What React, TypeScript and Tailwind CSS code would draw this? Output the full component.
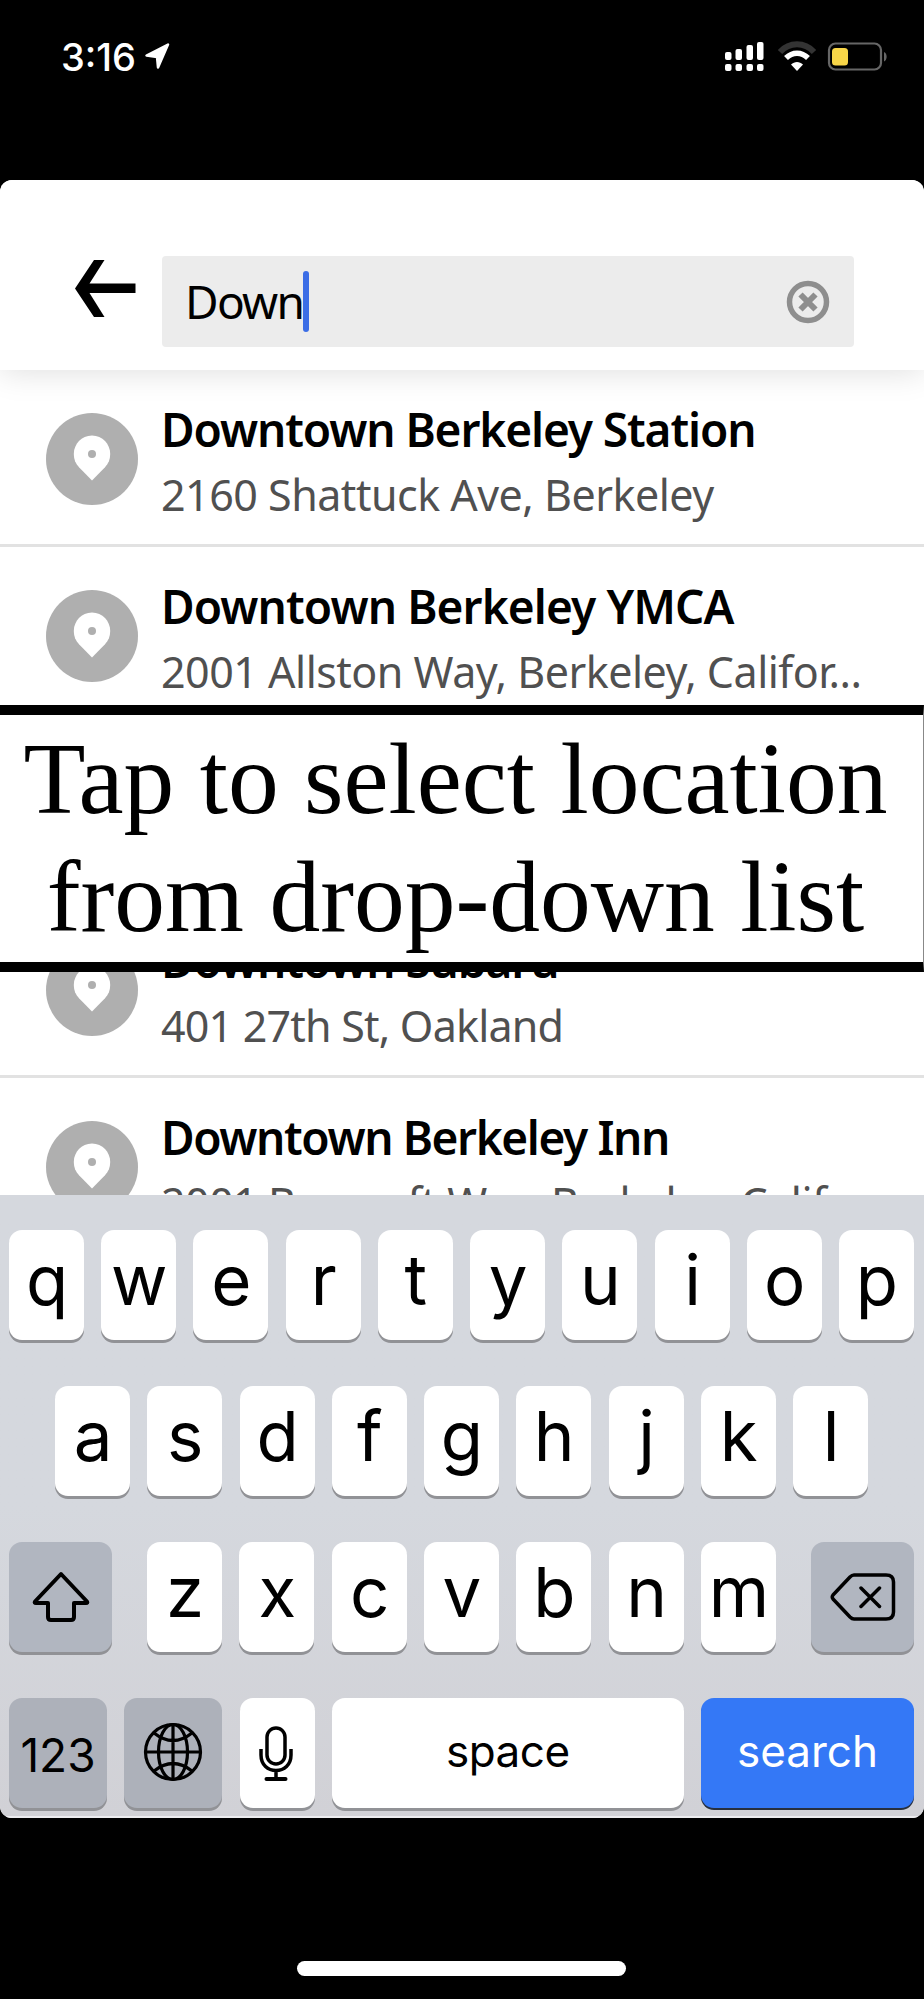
import React from "react";

function Key({ label }: { label: string }) {
  return (
    <div className="flex h-[110px] w-[75px] shrink-0 items-center justify-center rounded-[13px] bg-white text-[69px] leading-[68px] shadow-[0_3px_0_#919296]">
      <span className="pb-[10px] pl-[1px]">{label}</span>
    </div>
  );
}

function PinBadge() {
  return (
    <svg className="h-[92px] w-[92px] shrink-0" viewBox="0 0 92 92">
      <circle cx="46" cy="46" r="46" fill="#afafaf" />
      <path d="M46 22.500C35.500 22.500 27.800 31 27.800 41C27.800 46.500 29.500 50.500 33 54.200L46 67.500L59 54.200C62.500 50.500 64.200 46.500 64.200 41C64.200 31 56.500 22.500 46 22.500Z" fill="#fff" />
      <circle cx="46" cy="41" r="4" fill="#afafaf" />
    </svg>
  );
}

type RowProps = { title: string; address: string; titleSpacing?: string; addressSpacing?: string };

function Row({ title, address, titleSpacing = "tracking-[-1.1px]", addressSpacing = "tracking-[-0.5px]" }: RowProps) {
  return (
    <div className="flex h-[177px] shrink-0 border-b-[3px] border-[#e2e2e2] pt-[43px] pl-[46px]">
      <PinBadge />
      <div className="-mt-[16px] ml-[23px] font-['Noto_Sans',sans-serif] whitespace-nowrap">
        <div className={`h-[64px] text-[46px] leading-[64px] font-semibold ${titleSpacing}`}>{title}</div>
        <div className={`h-[64px] text-[43px] leading-[68px] text-[#505050] ${addressSpacing}`}>{address}</div>
      </div>
    </div>
  );
}

function StatusIcons() {
  return (
    <svg className="mt-[8px] ml-[553px] h-[32px] w-[165px]" viewBox="0 0 165 32">
      <g fill="#fff">
        <rect x="1" y="12" width="6.500" height="8" rx="2" />
        <rect x="11.500" y="9" width="6.500" height="11" rx="2" />
        <rect x="22.500" y="5" width="6.500" height="15" rx="2" />
        <rect x="33" y="2" width="6.500" height="18" rx="2" />
        <rect x="1" y="24" width="6.500" height="7" rx="2" />
        <rect x="11.500" y="24" width="6.500" height="7" rx="2" />
        <rect x="22.500" y="24" width="6.500" height="7" rx="2" />
        <rect x="33" y="24" width="6.500" height="7" rx="2" />
      </g>
      <path d="M56 12C65.500 1.800 80.500 1.800 90 12" fill="none" stroke="#333" strokeWidth="6" />
      <path d="M62 18C68.500 11.500 77.500 11.500 84 18" fill="none" stroke="#fff" strokeWidth="5.500" />
      <path d="M73 31L67 24.500C70.500 21 75.500 21 79 24.500Z" fill="#fff" />
      <rect x="105" y="3.500" width="52" height="26" rx="6.500" fill="none" stroke="#666" strokeWidth="2.200" />
      <rect x="108" y="8" width="16" height="17.500" rx="3.500" fill="#f8d648" />
      <path d="M160 12C163.500 13 163.500 20.500 160 21.500Z" fill="#666" />
    </svg>
  );
}

export default function App() {
  return (
    <div className="flex h-[1999px] w-[924px] flex-col overflow-hidden bg-black font-['Inter',sans-serif] text-black">
      <div className="flex h-[180px] shrink-0 pt-[32px] text-white">
        <div className="ml-[61px] w-[83px] text-[38px] leading-[50px] font-medium">3:16</div>
        <svg className="mt-[11px] h-[27px] w-[27px]" viewBox="0 0 27 27"><path d="M24 1.500L14 24.500L13 14L2.500 12.500Z" fill="#fff" stroke="#fff" strokeWidth="2.500" strokeLinejoin="round" /></svg>
        <StatusIcons />
      </div>
      <div className="relative flex h-[1638px] shrink-0 flex-col overflow-hidden rounded-[12px] bg-white">
        <div className="z-10 flex h-[190px] shrink-0 bg-white pt-[76px] shadow-[0_2px_30px_rgba(0,0,0,0.13)]">
          <svg className="mt-[3px] ml-[74px] h-[60px] w-[62px]" viewBox="0 0 62 60">
            <path d="M61.500 24.500V34H15.500L30.500 58H20L1 29.500L20 1H30.500L15.500 24.500Z" fill="#000" />
          </svg>
          <div className="ml-[26px] flex h-[91px] w-[692px] items-center rounded-[4px] bg-[#ececec] pl-[23px]">
            <span className="w-[118px] font-['Noto_Sans',sans-serif] text-[46px] tracking-[-1.7px]">Down</span>
            <div className="h-[61px] w-[6px] rounded-full bg-[#3b6de6]" />
            <svg className="ml-[477px] h-[44px] w-[44px]" viewBox="0 0 44 44">
              <circle cx="22" cy="22" r="18.500" fill="none" stroke="#8e8e8e" strokeWidth="5.500" />
              <path d="M14.500 14.500L29.500 29.500M29.500 14.500L14.500 29.500" stroke="#8e8e8e" strokeWidth="6" />
            </svg>
          </div>
        </div>
        <div className="flex h-[825px] shrink-0 flex-col overflow-hidden">
          <Row title="Downtown Berkeley Station" address="2160 Shattuck Ave, Berkeley" />
          <Row title="Downtown Berkeley YMCA" address="2001 Allston Way, Berkeley, Califor..." titleSpacing="tracking-[-0.9px]" />
          <div className="h-[177px] shrink-0" />
          <Row title="Downtown Subaru" address="401 27th St, Oakland" addressSpacing="tracking-[-0.8px]" />
          <Row title="Downtown Berkeley Inn" address="2001 Bancroft Way, Berkeley, Calif..." titleSpacing="tracking-[-1.4px]" />
        </div>
        <div className="flex h-[623px] shrink-0 flex-col gap-[46px] border-b-2 border-[#ececef] bg-linear-to-b from-[#d5d8de] from-50% to-[#d1d1d6] pt-[35px] pr-[10px] pl-[9px]">
          <div className="flex justify-between">{"qwertyuiop".split("").map((k) => <Key key={k} label={k} />)}</div>
          <div className="flex justify-between px-[46px]">{"asdfghjkl".split("").map((k) => <Key key={k} label={k} />)}</div>
          <div className="flex justify-between">
            <div className="flex h-[110px] w-[103px] items-center justify-center rounded-[13px] bg-[#b1b6c0] shadow-[0_3px_0_#919296]">
              <svg className="h-[52px] w-[58px]" viewBox="0 0 58 52"><path d="M29 3L55 30.500Q56 32 54 32H42V46Q42 49 39 49H19Q16 49 16 46V32H4Q2 32 3 30.500Z" fill="none" stroke="#000" strokeWidth="4" strokeLinejoin="round" /></svg>
            </div>
            <div className="flex w-[629px] justify-between">{"zxcvbnm".split("").map((k) => <Key key={k} label={k} />)}</div>
            <div className="flex h-[110px] w-[103px] items-center justify-center rounded-[13px] bg-[#b1b6c0] shadow-[0_3px_0_#919296]">
              <svg className="h-[50px] w-[66px]" viewBox="0 0 66 50"><path d="M24 3H56Q63.500 3 63.500 10V40Q63.500 47 56 47H24Q22 47 20 45L3 27Q1.500 25 3 23L20 5Q22 3 24 3ZM31 16L49.500 34.500M49.500 16L31 34.500" fill="none" stroke="#000" strokeWidth="3.500" strokeLinecap="round" strokeLinejoin="round" /></svg>
            </div>
          </div>
          <div className="flex justify-between text-[44px] leading-[60px]">
            <div className="flex h-[110px] w-[98px] items-center justify-center rounded-[13px] bg-[#adb1ba] pt-[4px] text-[46px] shadow-[0_3px_0_#919296]">123</div>
            <div className="flex h-[110px] w-[98px] items-center justify-center rounded-[13px] bg-[#adb1ba] pb-[2px] shadow-[0_3px_0_#919296]">
              <svg className="h-[60px] w-[60px]" viewBox="0 0 60 60" fill="none" stroke="#000" strokeWidth="3.200"><circle cx="30" cy="30" r="27.500" /><ellipse cx="30" cy="30" rx="14.500" ry="27.500" /><path d="M30 2.500V57.500M2.500 30H57.500M11 11Q30 26 49 11M11 49Q30 34 49 49" /></svg>
            </div>
            <div className="flex h-[110px] w-[75px] items-center justify-center rounded-[13px] bg-white pr-[2px] pb-[4px] shadow-[0_3px_0_#919296]">
              <svg className="mt-[6px] h-[56px] w-[36px]" viewBox="0 0 36 56" fill="none" stroke="#000" strokeWidth="3.500"><rect x="9" y="2" width="18" height="36" rx="9" /><path d="M3 23V29C3 39 10 44.500 18 44.500C26 44.500 33 39 33 29V23M18 44.500V53" /><path d="M8.500 53H27.500" strokeWidth="4" strokeLinecap="round" /></svg>
            </div>
            <div className="flex h-[110px] w-[352px] items-center justify-center rounded-[13px] bg-white pb-[4px] tracking-[-0.5px] shadow-[0_3px_0_#919296]">space</div>
            <div className="flex h-[110px] w-[213px] items-center justify-center rounded-[13px] bg-[#3478f6] pb-[4px] text-white shadow-[0_2px_0_#27303f]">search</div>
          </div>
        </div>
        <div className="absolute top-[525px] left-0 z-20 h-[267px] w-full border-y-[10px] border-r border-y-black border-r-[#888] bg-white pt-[5px] pr-[12px] text-center font-['Liberation_Serif',serif] text-[101.5px] leading-[118px]">
          Tap to select location<br />from drop-down list
        </div>
      </div>
      <div className="mt-[143px] ml-[297px] h-[15px] w-[329px] shrink-0 rounded-full bg-white" />
    </div>
  );
}
